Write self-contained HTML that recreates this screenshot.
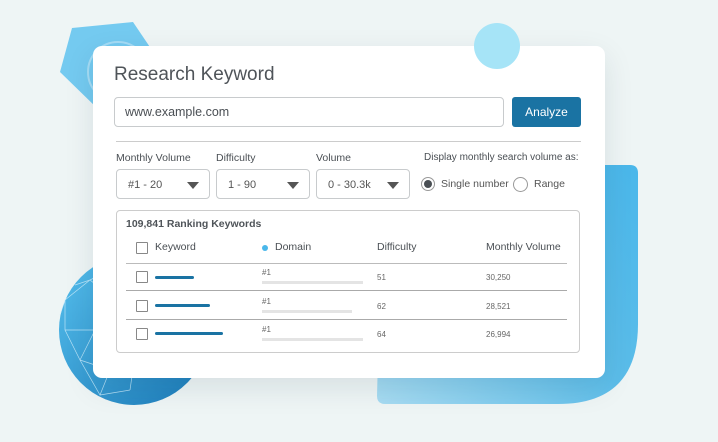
<!DOCTYPE html>
<html><head><style>
body{margin:0;width:718px;height:442px;background:#eef5f5;position:relative;overflow:hidden;font-family:"Liberation Sans",sans-serif;color:#4a4f54}
.abs{position:absolute}
.card{left:93px;top:46px;width:512px;height:332px;background:#fff;border-radius:9px;box-shadow:0 10px 30px rgba(0,40,60,.10)}
.sel{position:absolute;top:169px;height:30px;border:1px solid #c8cbcd;border-radius:4px;font-size:11px;color:#555;box-sizing:border-box;padding:9px 11px}
.sel:after{content:"";position:absolute;right:10px;top:12px;border-left:6px solid transparent;border-right:6px solid transparent;border-top:7px solid #555}
.lbl{position:absolute;top:152px;font-size:10.5px;color:#4a4f54}
.cb{position:absolute;width:10px;height:10px;border:1px solid #888;border-radius:1px}
.line{position:absolute;height:1px;background:#bbb}
.small{position:absolute;font-size:8px;color:#666}
</style></head><body>
<svg class="abs" style="left:0;top:0" width="718" height="442">
<defs>
<linearGradient id="g1" x1="0" y1="1" x2="1" y2="0"><stop offset="0" stop-color="#a8dcf2"/><stop offset=".5" stop-color="#5cbde9"/><stop offset="1" stop-color="#4ab7ea"/></linearGradient>
<linearGradient id="g2" x1="0" y1="0" x2="1" y2="1"><stop offset="0" stop-color="#56c0ee"/><stop offset="1" stop-color="#1b7ab8"/></linearGradient>
</defs>
<polygon points="72,28 133,22 160,62 140,100 100,111 60,72" fill="#74caf0"/>
<circle cx="118" cy="72" r="30" fill="none" stroke="#a5dcf5" stroke-width="2"/>
<path d="M383,165 H630 Q638,165 638,173 V324 Q638,404 558,404 H385 Q377,404 377,396 Z" fill="url(#g1)"/>
<circle cx="134" cy="330" r="75" fill="url(#g2)"/>
<g stroke="#d5f0fc" stroke-width=".7" opacity=".8" fill="none">
<path d="M65,300 L90,280 L115,300 L95,330 L65,330 Z M90,280 L120,265 L115,300 M95,330 L80,360 L110,370 L95,330 M115,300 L140,320 L110,370 M65,330 L80,360 M80,360 L100,395 L110,370 M140,320 L130,390 M60,315 L65,300 M75,285 L90,280 M100,395 L130,390"/>
</g>
</svg>
<div class="abs card"></div>
<svg class="abs" style="left:474px;top:23px" width="46" height="46"><circle cx="23" cy="23" r="23" fill="#a6e4f7"/></svg>
<div class="abs" style="left:114px;top:64px;font-size:19px;color:#4f5459">Research Keyword</div>
<div class="abs" style="left:114px;top:97px;width:390px;height:30px;border:1px solid #c8cbcd;border-radius:4px;box-sizing:border-box;padding:7px 10px;font-size:12.5px;color:#4a4f54">www.example.com</div>
<div class="abs" style="left:512px;top:97px;width:69px;height:30px;background:#1a73a3;border-radius:3px;color:#fff;font-size:12px;text-align:center;line-height:30px">Analyze</div>
<div class="line" style="left:116px;top:141px;width:465px;background:#ccc"></div>
<div class="lbl" style="left:116px">Monthly Volume</div>
<div class="lbl" style="left:216px">Difficulty</div>
<div class="lbl" style="left:316px">Volume</div>
<div class="lbl" style="left:424px;font-size:10px">Display monthly search volume as:</div>
<div class="sel" style="left:116px;width:94px">#1 - 20</div>
<div class="sel" style="left:216px;width:94px">1 - 90</div>
<div class="sel" style="left:316px;width:94px">0 - 30.3k</div>
<div class="abs" style="left:421px;top:177px;width:12px;height:12px;border:1px solid #999;border-radius:50%"></div>
<div class="abs" style="left:424px;top:180px;width:8px;height:8px;background:#4a4f54;border-radius:50%"></div>
<div class="abs" style="left:441px;top:178px;font-size:10.5px;color:#555">Single number</div>
<div class="abs" style="left:513px;top:177px;width:13px;height:13px;border:1px solid #999;border-radius:50%"></div>
<div class="abs" style="left:534px;top:178px;font-size:10.5px;color:#555">Range</div>
<div class="abs" style="left:116px;top:210px;width:464px;height:143px;border:1px solid #ccc;border-radius:4px;box-sizing:border-box"></div>
<div class="abs" style="left:126px;top:218px;font-size:10.5px;font-weight:bold;color:#4f5459">109,841 Ranking Keywords</div>
<div class="cb" style="left:136px;top:242px"></div>
<div class="abs" style="left:155px;top:241px;font-size:10.5px">Keyword</div>
<div class="abs" style="left:262px;top:245px;width:6px;height:6px;border-radius:50%;background:#4ab7ea"></div>
<div class="abs" style="left:275px;top:241px;font-size:10.5px">Domain</div>
<div class="abs" style="left:377px;top:241px;font-size:10.5px">Difficulty</div>
<div class="abs" style="left:486px;top:241px;font-size:10.5px">Monthly Volume</div>
<div class="line" style="left:126px;top:263px;width:441px"></div>
<div class="line" style="left:126px;top:290px;width:441px;background:#aaa"></div>
<div class="line" style="left:126px;top:319px;width:441px;background:#aaa"></div>
<div class="cb" style="left:136px;top:271px"></div>
<div class="cb" style="left:136px;top:300px"></div>
<div class="cb" style="left:136px;top:328px"></div>
<div class="abs" style="left:155px;top:276px;width:39px;height:3px;background:#1a73a3;border-radius:2px"></div>
<div class="abs" style="left:155px;top:304px;width:55px;height:3px;background:#1a73a3;border-radius:2px"></div>
<div class="abs" style="left:155px;top:332px;width:68px;height:3px;background:#1a73a3;border-radius:2px"></div>
<div class="small" style="left:262px;top:268px">#1</div>
<div class="small" style="left:262px;top:297px">#1</div>
<div class="small" style="left:262px;top:325px">#1</div>
<div class="abs" style="left:262px;top:281px;width:101px;height:3px;background:#e4e4e4"></div>
<div class="abs" style="left:262px;top:310px;width:90px;height:3px;background:#e4e4e4"></div>
<div class="abs" style="left:262px;top:338px;width:101px;height:3px;background:#e4e4e4"></div>
<div class="small" style="left:377px;top:273px">51</div>
<div class="small" style="left:377px;top:302px">62</div>
<div class="small" style="left:377px;top:330px">64</div>
<div class="small" style="left:486px;top:273px">30,250</div>
<div class="small" style="left:486px;top:302px">28,521</div>
<div class="small" style="left:486px;top:330px">26,994</div>
</body></html>
